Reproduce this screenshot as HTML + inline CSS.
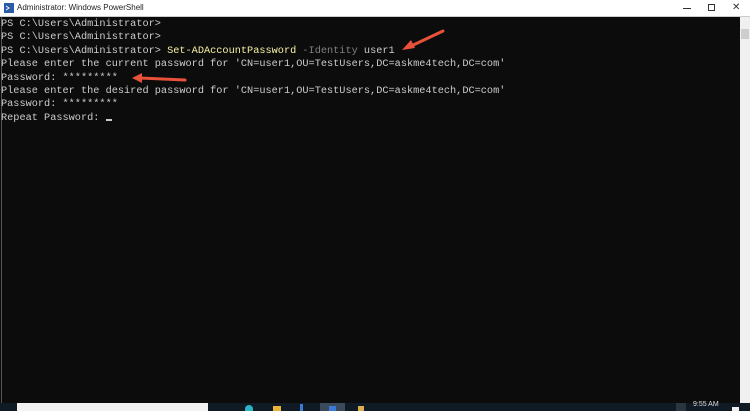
<!DOCTYPE html>
<html><head><meta charset="utf-8"><style>
*{margin:0;padding:0;box-sizing:border-box}
body{width:750px;height:411px;overflow:hidden;background:#0c0c0c;position:relative;font-family:"Liberation Sans",sans-serif}
#title{position:absolute;left:0;top:0;width:750px;height:17px;background:#fff;border-bottom:1px solid #ccc}
#title span{position:absolute;left:17px;top:3px;font-size:8px;color:#222}
#con{position:absolute;left:1px;top:17px;width:739px;height:386px;background:#0c0c0c;border-left:1px solid #555}
pre{position:absolute;left:1px;top:18px;font-family:"Liberation Mono",monospace;font-size:10.25px;line-height:13.4px;color:#cccccc;white-space:pre}
.y{color:#f9f1a5}.g{color:#808080}
#sb{position:absolute;left:740px;top:17px;width:10px;height:386px;background:#f0f0f0}
#task{position:absolute;left:0;top:403px;width:750px;height:8px;background:#0f1a24}
</style></head><body>
<div id="title">
<svg style="position:absolute;left:4px;top:3px" width="10" height="10"><rect width="10" height="10" fill="#2a5aa8"/><path d="M2 3l3 2-3 2" stroke="#fff" fill="none"/></svg>
<span>Administrator: Windows PowerShell</span>
<div style="position:absolute;left:683px;top:8px;width:8px;height:1px;background:#333"></div>
<div style="position:absolute;left:708px;top:4px;width:7px;height:7px;border:1px solid #333"></div>
<span style="left:732px;top:2px;font-size:10px;color:#333">✕</span>
</div>
<div id="con"></div>
<pre>PS C:\Users\Administrator>
PS C:\Users\Administrator>
PS C:\Users\Administrator> <span class="y">Set-ADAccountPassword</span> <span class="g">-Identity</span> user1
Please enter the current password for 'CN=user1,OU=TestUsers,DC=askme4tech,DC=com'
Password: *********
Please enter the desired password for 'CN=user1,OU=TestUsers,DC=askme4tech,DC=com'
Password: *********
Repeat Password: <span style="display:inline-block;width:6px;height:2px;background:#ccc;vertical-align:-1px"></span></pre>
<svg style="position:absolute;left:0;top:0" width="750" height="411">
<path d="M443 31 L409 47" stroke="#e8513a" stroke-width="3" stroke-linecap="round"/>
<path d="M402 50 l9 -10 l4 8 z" fill="#e8513a"/>
<path d="M185 80 L140 78" stroke="#e8513a" stroke-width="3" stroke-linecap="round"/>
<path d="M132 78 l10 -5 l0 10 z" fill="#e8513a"/>
</svg>
<div id="sb"><div style="position:absolute;left:1px;top:12px;width:8px;height:10px;background:#cdcdcd"></div></div>
<div id="task">
<div style="position:absolute;left:17px;top:0;width:191px;height:8px;background:#f2f2f2"></div>
<div style="position:absolute;left:245px;top:2px;width:8px;height:6px;border-radius:4px 4px 0 0;background:#2bb3c8"></div>
<div style="position:absolute;left:273px;top:3px;width:8px;height:5px;background:#e8b53a"></div>
<div style="position:absolute;left:300px;top:1px;width:3px;height:7px;background:#3a7bd5"></div>
<div style="position:absolute;left:320px;top:0;width:25px;height:8px;background:#3a4a5a"></div>
<div style="position:absolute;left:329px;top:3px;width:7px;height:5px;background:#3a7bd5"></div>
<div style="position:absolute;left:358px;top:3px;width:6px;height:5px;background:#d8b050"></div>
<div style="position:absolute;left:676px;top:0;width:10px;height:8px;background:#2a3540"></div>
<span style="position:absolute;left:693px;top:-2px;font-size:7px;color:#ddd">9:55 AM</span>
<div style="position:absolute;left:732px;top:4px;width:7px;height:4px;background:#eee"></div>
</div>
</body></html>
